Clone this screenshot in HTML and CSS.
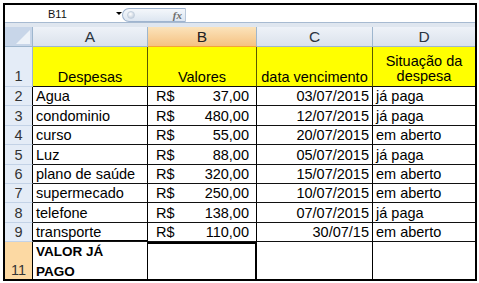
FILE: index.html
```html
<!DOCTYPE html>
<html lang="pt">
<head>
  <meta charset="UTF-8">
  <title>Despesas</title>
  <link rel="stylesheet" href="styles.css">
</head>
<body>
  <div class="sheet">
    <div class="formula-bar">
      <div class="name-box">
        <span class="ref">B11</span>
        <span class="arrow"></span>
      </div>
      <div class="fx-box">
        <span class="knob"></span>
        <i class="fx">fx</i>
      </div>
      <div class="formula"></div>
    </div>
    <div class="band"></div>

    <table class="grid">
      <colgroup>
        <col class="c-head">
        <col class="c-a">
        <col class="c-b">
        <col class="c-c">
        <col class="c-d">
      </colgroup>
      <thead>
        <tr class="hdr">
          <th class="corner"><span class="tri"></span></th>
          <th>A</th>
          <th class="sel-col">B</th>
          <th>C</th>
          <th>D</th>
        </tr>
      </thead>
      <tbody>
        <tr class="r1">
          <th class="rh rh1">1</th>
          <td class="yel center">Despesas</td>
          <td class="yel center">Valores</td>
          <td class="yel center">data vencimento</td>
          <td class="yel center wrap">Situação da<br>despesa</td>
        </tr>
        <tr class="r-19">
          <th class="rh">2</th>
          <td>Agua</td>
          <td class="money"><span class="cur">R$</span>37,00</td>
          <td class="date">03/07/2015</td>
          <td>já paga</td>
        </tr>
        <tr class="r-20">
          <th class="rh">3</th>
          <td>condominio</td>
          <td class="money"><span class="cur">R$</span>480,00</td>
          <td class="date">12/07/2015</td>
          <td>já paga</td>
        </tr>
        <tr class="r-19">
          <th class="rh">4</th>
          <td>curso</td>
          <td class="money"><span class="cur">R$</span>55,00</td>
          <td class="date">20/07/2015</td>
          <td>em aberto</td>
        </tr>
        <tr class="r-20">
          <th class="rh">5</th>
          <td>Luz</td>
          <td class="money"><span class="cur">R$</span>88,00</td>
          <td class="date">05/07/2015</td>
          <td>já paga</td>
        </tr>
        <tr class="r-19">
          <th class="rh">6</th>
          <td>plano de saúde</td>
          <td class="money"><span class="cur">R$</span>320,00</td>
          <td class="date">15/07/2015</td>
          <td>em aberto</td>
        </tr>
        <tr class="r-19">
          <th class="rh">7</th>
          <td>supermecado</td>
          <td class="money"><span class="cur">R$</span>250,00</td>
          <td class="date">10/07/2015</td>
          <td>em aberto</td>
        </tr>
        <tr class="r-20">
          <th class="rh">8</th>
          <td>telefone</td>
          <td class="money"><span class="cur">R$</span>138,00</td>
          <td class="date">07/07/2015</td>
          <td>já paga</td>
        </tr>
        <tr class="r-19">
          <th class="rh">9</th>
          <td class="thick-bottom">transporte</td>
          <td class="money"><span class="cur">R$</span>110,00</td>
          <td class="date">30/07/15</td>
          <td>em aberto</td>
        </tr>
        <tr class="r11">
          <th class="rh sel-row">11</th>
          <td class="total"><div class="total-text">VALOR JÁ<br>PAGO</div></td>
          <td class="sel"></td>
          <td></td>
          <td></td>
        </tr>
      </tbody>
    </table>
  </div>
</body>
</html>
```

FILE: styles.css
```css
body {
  margin: 0;
  background: #fff;
  font-family: "Liberation Sans", Arial, sans-serif;
}
.sheet {
  margin: 3px 0 0 3px;
  width: 474px;
  height: 278px;
  border: 2px solid #000;
  box-sizing: border-box;
  overflow: hidden;
  background: #fff;
}

/* formula bar */
.formula-bar {
  display: flex;
  align-items: center;
  height: 17px;
  border-bottom: 1px solid #a7bad1;
}
.name-box {
  width: 117px;
  display: flex;
  align-items: center;
  font-size: 11px;
  color: #111;
}
.ref {
  margin-left: 43px;
}
.arrow {
  margin-left: 49px;
  width: 0;
  height: 0;
  border-left: 3px solid transparent;
  border-right: 3px solid transparent;
  border-top: 3px solid #000;
}
.fx-box {
  width: 64px;
  height: 14px;
  margin-top: 3px;
  box-sizing: border-box;
  border: 1px solid #9fb4cf;
  border-right-color: #b9c8da;
  border-radius: 8px 0 0 8px;
  background: linear-gradient(#f4f7fb, #dde6f1);
  display: flex;
  align-items: center;
  justify-content: space-between;
  padding: 0 3px 0 4px;
}
.knob {
  width: 6px;
  height: 6px;
  border-radius: 50%;
  background: radial-gradient(circle at 40% 35%, #fff, #b5c3d4);
  border: 1px solid #c4d0de;
}
.fx {
  font-family: "Liberation Serif", serif;
  font-size: 11px;
  color: #6d6d6d;
  font-weight: bold;
}
.formula {
  flex: 1;
}
.band {
  height: 4px;
  background: #dfe6ef;
}

/* grid */
.grid {
  border-collapse: separate;
  border-spacing: 0;
  table-layout: fixed;
  width: 470px;
  font-size: 14.5px;
  color: #000;
}
.c-head { width: 28px; }
.c-a { width: 115px; }
.c-b { width: 109px; }
.c-c { width: 116px; }
.c-d { width: 102px; }

.hdr { height: 20px; }
.r1 { height: 40px; }
.r-19 { height: 19px; }
.r-20 { height: 20px; }
.r11 { height: 37px; }

th, td {
  padding: 0 3px;
  box-sizing: border-box;
  white-space: nowrap;
  overflow: hidden;
}
td {
  vertical-align: bottom;
  text-align: left;
  line-height: 17px;
  border-right: 1px solid #000;
  border-bottom: 1px solid #111;
}
td:last-child {
  border-right: none;
}

.hdr th {
  font-weight: normal;
  font-size: 15.5px;
  color: #2b3440;
  text-align: center;
  vertical-align: middle;
  background: linear-gradient(#eef2f8, #dbe2ec);
  border-right: 1px solid #9eb6ce;
  border-bottom: 1px solid #9eb6ce;
}
.hdr th:last-child {
  border-right: none;
}
.hdr .sel-col {
  background: linear-gradient(#fbe3bb, #f5c282);
  border-bottom-color: #f2a33a;
  color: #222;
}
.hdr .corner {
  position: relative;
  background: #c8d6e9;
  padding: 0;
}
.tri {
  position: absolute;
  right: 2px;
  bottom: 2px;
  width: 0;
  height: 0;
  border-left: 14px solid transparent;
  border-bottom: 14px solid #eef3f9;
}

.rh {
  font-weight: normal;
  font-size: 14.5px;
  color: #333;
  text-align: center;
  vertical-align: bottom;
  line-height: 17px;
  background: #e4ecf7;
  border-right: 1px solid #000;
  border-bottom: 1px solid #c3d2e6;
}
.rh1 {
  border-right-color: #9eb6ce;
  line-height: 20px;
}
.rh.sel-row {
  background: #fcd9a3;
  border-right-color: #000;
  border-bottom: none;
}

.yel {
  background: #ffff00;
  border-right-color: #5a5a00;
}
.center {
  text-align: center;
}
.wrap {
  white-space: normal;
  line-height: 15px;
  padding-bottom: 2px;
}
.money {
  text-align: right;
  padding-right: 7px;
}
.cur {
  float: left;
  margin-left: 5px;
}
.date {
  text-align: right;
}
.thick-bottom {
  box-shadow: inset 0 -1px 0 #000;
}
.r11 td {
  border-bottom: none;
}
.total {
  padding: 0 3px;
  vertical-align: top;
}
.total-text {
  height: 37px;
  font-weight: bold;
  font-size: 13.5px;
  line-height: 20px;
  white-space: normal;
}
.sel {
  box-shadow: inset 0 2px 0 #000, inset -1px 0 0 #000;
}
```
